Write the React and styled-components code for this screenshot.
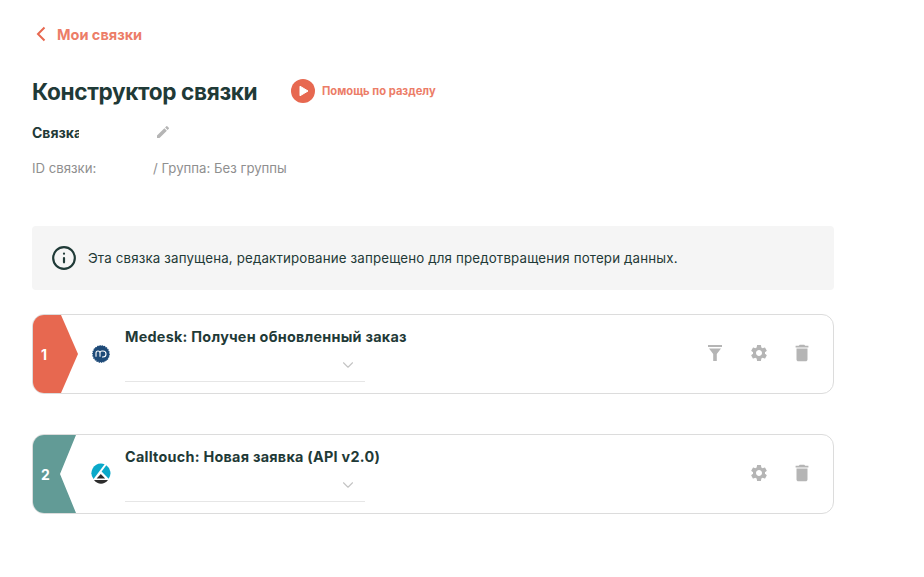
import React from 'react';
import styled, { createGlobalStyle } from 'styled-components';
import { ChevronDown, Info } from 'lucide-react';
import { MdEdit, MdSettings, MdDelete } from 'react-icons/md';

const GlobalStyle = createGlobalStyle`
    html, body {
        margin: 0;
        padding: 0;
        background: #fff;
        font-family: Inter, "Noto Sans", sans-serif;
        color: #1f3a37;
    }
`;

const Page = styled.div`
    width: 924px;
    height: 577px;
    box-sizing: border-box;
    padding: 24px 90px 0 32px;
    overflow: hidden;
`;

const BackLink = styled.a`
    display: flex;
    align-items: center;
    gap: 11px;
    height: 20px;
    padding-left: 4px;
    color: #ec7d68;
    font-size: 14.5px;
    font-weight: 700;
`;

const TitleRow = styled.div`
    display: flex;
    align-items: center;
    margin-top: 34px;
    height: 26px;
`;

const Title = styled.h1`
    margin: 0;
    width: 225px;
    font-size: 22.6px;
    font-weight: 700;
    letter-spacing: -0.35px;
    white-space: nowrap;
`;

const HelpLink = styled.a`
    display: flex;
    align-items: center;
    gap: 7px;
    margin-left: 34px;
    color: #ec7d68;
    font-size: 11.2px;
    font-weight: 700;
`;

const NameRow = styled.div`
    display: flex;
    align-items: center;
    margin-top: 18px;
    height: 20px;
`;

const NameField = styled.div`
    width: 47px;
    overflow: hidden;
    white-space: nowrap;
    font-size: 14px;
    font-weight: 700;
`;

const EditButton = styled.span`
    display: flex;
    margin-left: 76px;
    color: #b5b5b5;
`;

const MetaRow = styled.div`
    display: flex;
    margin-top: 17px;
    height: 18px;
    align-items: center;
    color: #8f8f8f;
    font-size: 13.2px;
`;

const MetaLabel = styled.span`
    width: 121px;
`;

const Notice = styled.div`
    display: flex;
    align-items: center;
    gap: 11px;
    height: 64px;
    margin-top: 49px;
    padding-left: 19px;
    border-radius: 4px;
    background: #f5f5f5;
    font-size: 13.3px;
    letter-spacing: 0.16px;
    color: #1f3a37;
`;

const Steps = styled.div`
    display: flex;
    flex-direction: column;
    gap: 40px;
    margin-top: 24px;
`;

const Card = styled.div`
    display: flex;
    align-items: stretch;
    height: 80px;
    box-sizing: border-box;
    border: 1px solid #dcdcdc;
    border-radius: 12px;
    overflow: hidden;
`;

const Badge = styled.div`
    display: flex;
    align-items: center;
    flex: none;
    width: 45px;
    padding-left: 8px;
    box-sizing: border-box;
    color: #fff;
    font-size: 14px;
    font-weight: 700;
    background: ${(p) => (p.$second ? '#629b96' : '#e76850')};
    clip-path: ${(p) =>
        p.$second
            ? 'polygon(0 0, 43px 0, 27px 50%, 43px 100%, 0 100%)'
            : 'polygon(0 0, 28px 0, 45px 50%, 28px 100%, 0 100%)'};
`;

const LogoBox = styled.div`
    display: flex;
    align-items: center;
    justify-content: center;
    flex: none;
    width: 45px;
    margin-right: 2px;
`;

const StepBody = styled.div`
    flex: none;
    width: 240px;
    padding-top: 13px;
`;

const StepTitle = styled.div`
    font-size: 14.4px;
    font-weight: 700;
    letter-spacing: 0.26px;
    line-height: 18px;
    white-space: nowrap;
`;

const SelectField = styled.div`
    display: flex;
    align-items: center;
    justify-content: flex-end;
    height: 32px;
    margin-top: 3px;
    padding-right: 8px;
    border-bottom: 1px solid #e6e6e6;
    color: #c4c4c4;
`;

const Actions = styled.div`
    display: flex;
    align-items: center;
    justify-content: flex-end;
    flex: 1;
    gap: 22px;
    padding: 0 20px 3px 0;
    color: #b5b5b5;
`;

const ActionIcon = styled.span`
    display: flex;
    width: 22px;
    justify-content: center;

    &:last-child {
        margin-left: -1px;
    }
`;

const BackIcon = () => (
    <svg width="10" height="16" viewBox="0 0 10 16" fill="none">
        <path d="M8.5 1.5 L2 8 L8.5 14.5" stroke="#e76850" strokeWidth="2" />
    </svg>
);

const PlayIcon = () => (
    <svg width="24" height="24" viewBox="0 0 24 24">
        <circle cx="12" cy="12" r="12" fill="#e76850" />
        <path d="M9 7.2 L17 12 L9 16.8 Z" fill="#fff" stroke="#fff" strokeWidth="1" strokeLinejoin="round" />
    </svg>
);

const FilterIcon = () => (
    <svg width="14" height="16" viewBox="0 0 14 16" fill="currentColor">
        <rect x="0" y="0" width="14" height="2" />
        <path d="M1 3.5 H13 L8.8 9 V16 H5.2 V9 Z" />
    </svg>
);

const MedeskLogo = () => (
    <svg width="18" height="18" viewBox="0 0 18 18">
        <circle cx="9" cy="9" r="8.2" fill="#1e4a78" stroke="#1e4a78" strokeWidth="1.2" strokeDasharray="1.4 0.9" />
        <circle cx="9" cy="9" r="7.8" fill="#1e4a78" />
        <path d="M4 11.8 V8 a2 2 0 0 1 4 0 V11.8 M8 8 a2 2 0 0 1 2 -2 H11 a3 3 0 0 1 0 6 H10" fill="none" stroke="#fff" strokeWidth="1.1" />
    </svg>
);

const CalltouchLogo = () => (
    <svg width="20" height="22" viewBox="0 0 20 22">
        <path d="M10 0.5 a9.6 9.6 0 0 0 -7.4 15.6 L13.6 1.3 A9.6 9.6 0 0 0 10 0.5 Z" fill="#0aa9c9" />
        <path d="M15.3 2.2 L10.6 8.6 L17.6 15.8 A9.6 9.6 0 0 0 15.3 2.2 Z" fill="#0aa9c9" />
        <path d="M9.8 11 L14.2 15.6 H5.6 Z" fill="#2d2d2d" />
        <path d="M3 17 H17 C15 19.6 12.6 20.8 10 20.8 C7.4 20.8 5 19.6 3 17 Z" fill="#2d2d2d" />
    </svg>
);

const steps = [
    { id: 1, title: 'Medesk: Получен обновленный заказ', logo: <MedeskLogo />, filter: true },
    { id: 2, title: 'Calltouch: Новая заявка (API v2.0)', logo: <CalltouchLogo />, second: true },
];

const App = () => (
    <Page>
        <GlobalStyle />
        <BackLink>
            <BackIcon />
            Мои связки
        </BackLink>
        <TitleRow>
            <Title>Конструктор связки</Title>
            <HelpLink>
                <PlayIcon />
                Помощь по разделу
            </HelpLink>
        </TitleRow>
        <NameRow>
            <NameField>Связка</NameField>
            <EditButton>
                <MdEdit size={16} />
            </EditButton>
        </NameRow>
        <MetaRow>
            <MetaLabel>ID связки:</MetaLabel>
            <span>/ Группа: Без группы</span>
        </MetaRow>
        <Notice>
            <Info size={26} strokeWidth={2} color="#1f3a37" />
            Эта связка запущена, редактирование запрещено для предотвращения потери данных.
        </Notice>
        <Steps>
            {steps.map((step) => (
                <Card key={step.id}>
                    <Badge $second={step.second}>{step.id}</Badge>
                    <LogoBox>{step.logo}</LogoBox>
                    <StepBody>
                        <StepTitle>{step.title}</StepTitle>
                        <SelectField>
                            <ChevronDown size={18} strokeWidth={1.5} />
                        </SelectField>
                    </StepBody>
                    <Actions>
                        {step.filter && (
                            <ActionIcon>
                                <FilterIcon />
                            </ActionIcon>
                        )}
                        <ActionIcon>
                            <MdSettings size={20} />
                        </ActionIcon>
                        <ActionIcon>
                            <MdDelete size={22} />
                        </ActionIcon>
                    </Actions>
                </Card>
            ))}
        </Steps>
    </Page>
);

export default App;
